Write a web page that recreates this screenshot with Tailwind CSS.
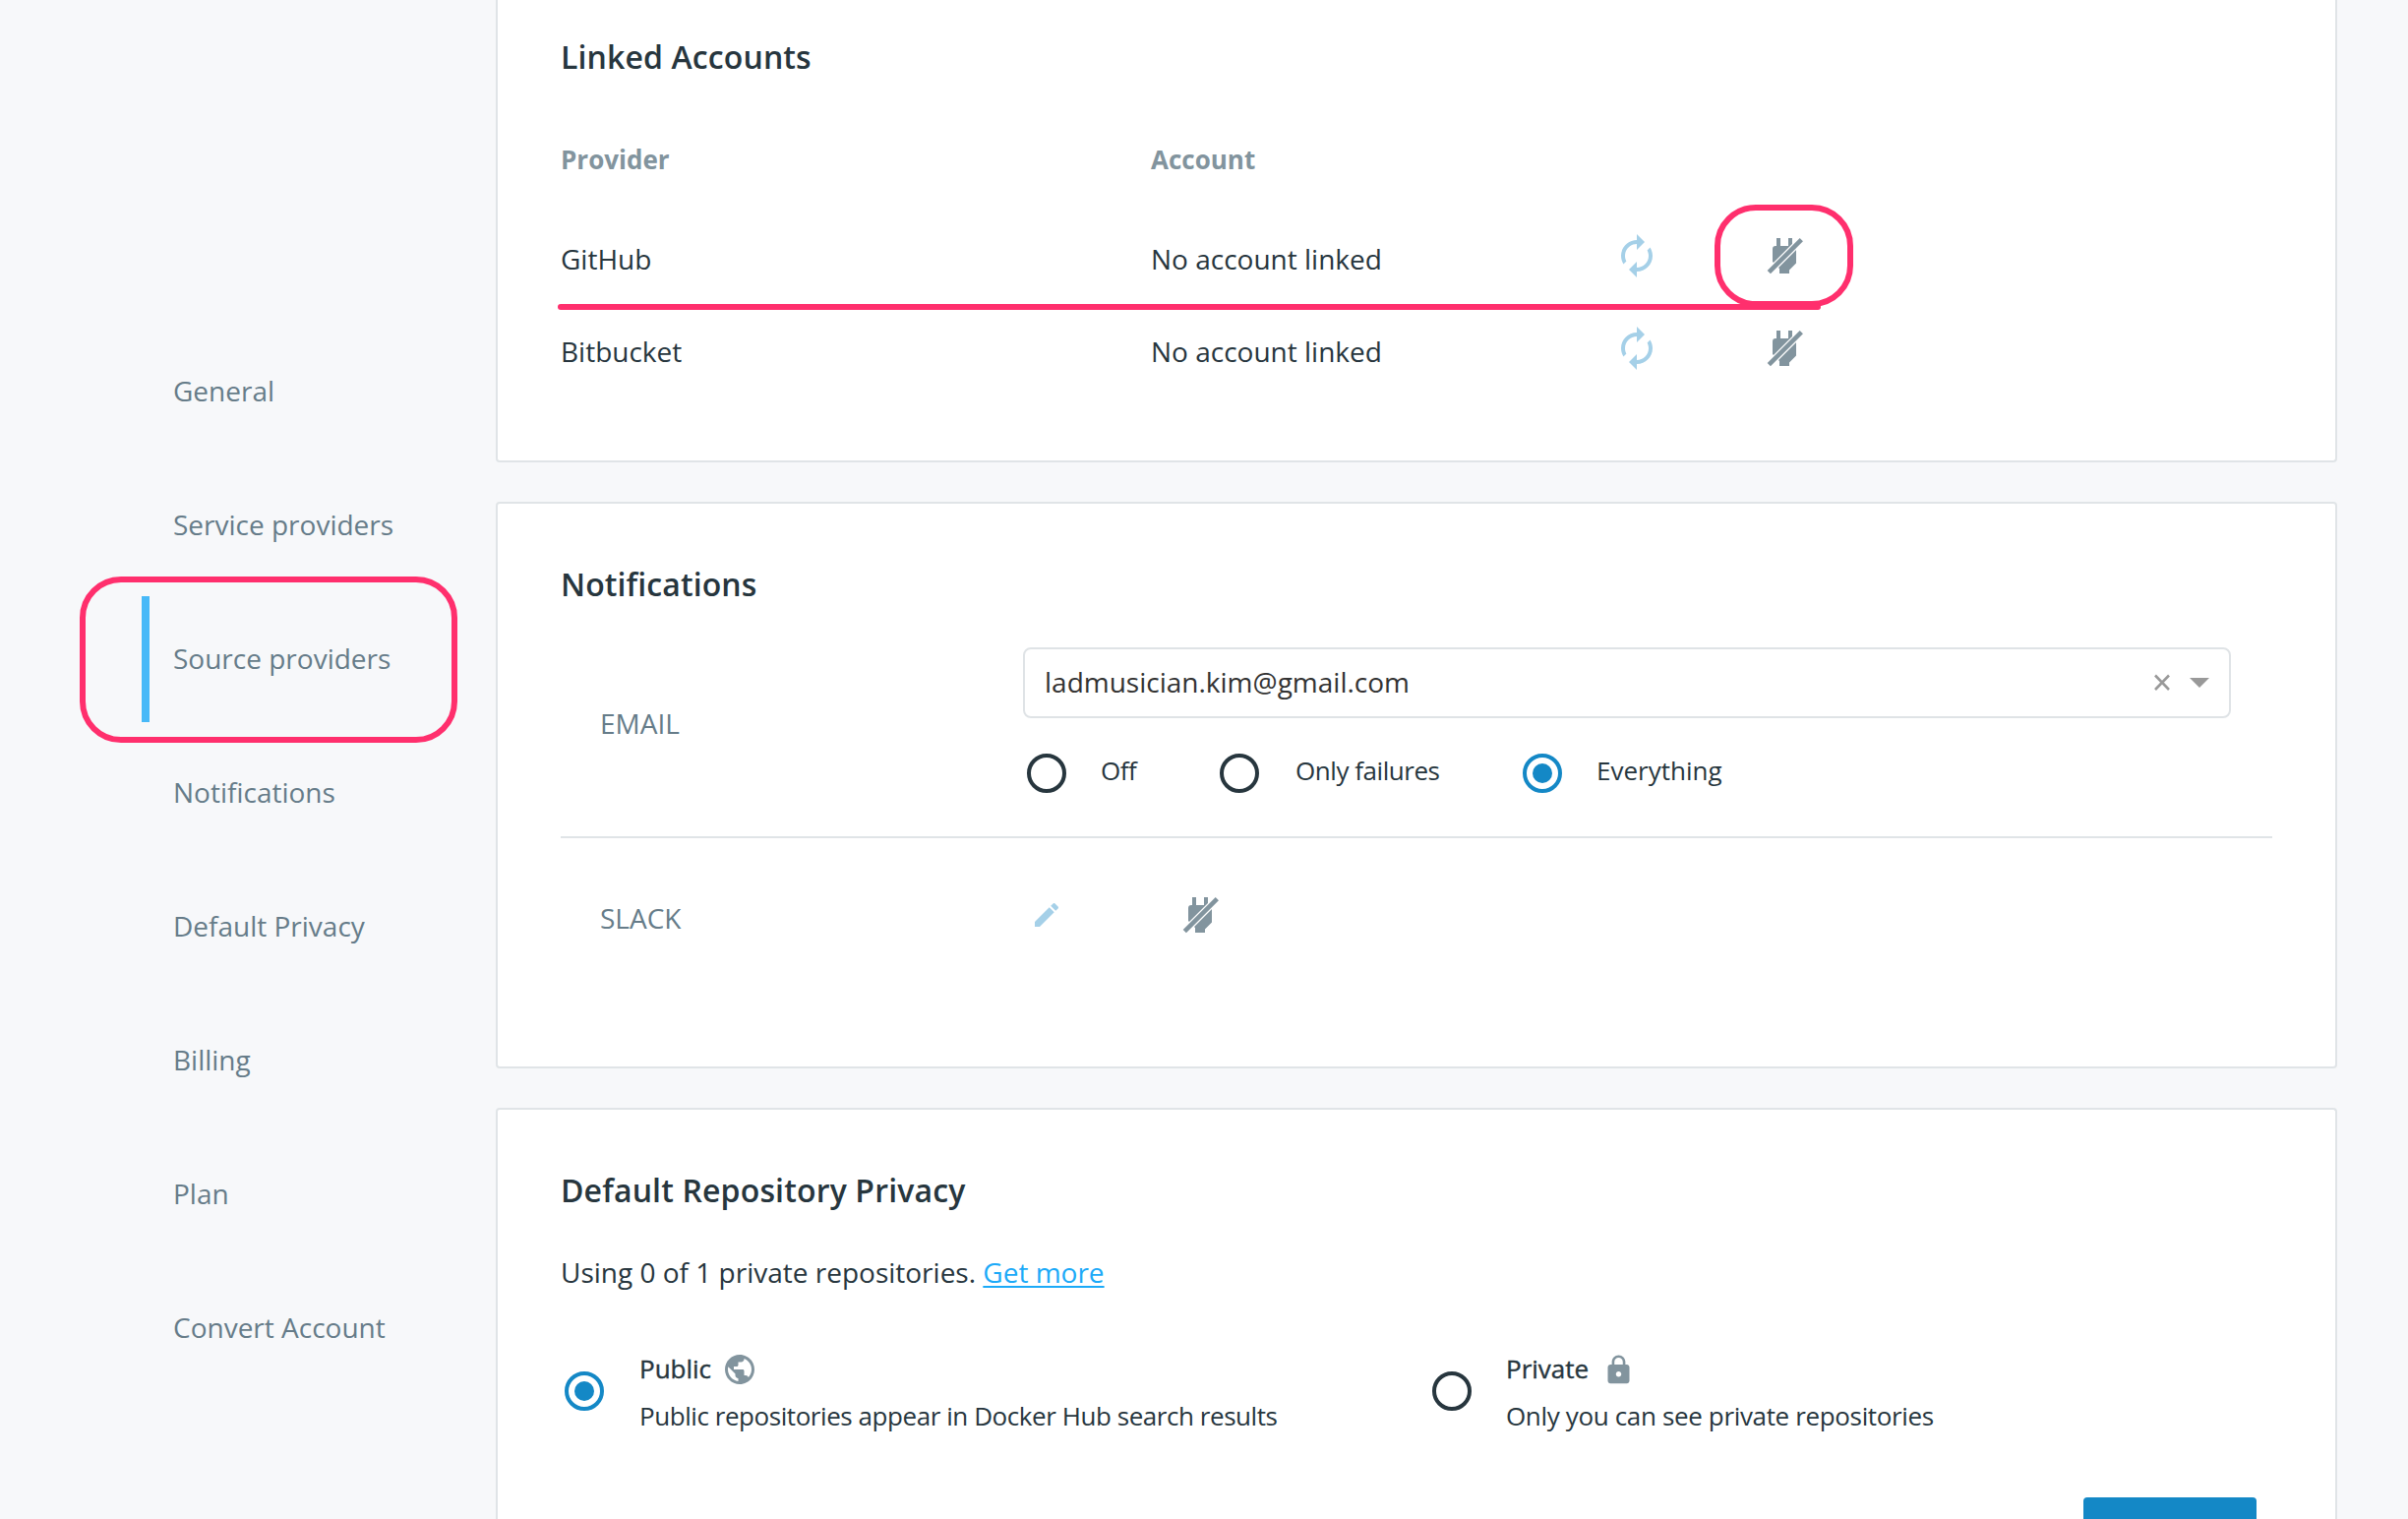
<!DOCTYPE html>
<html lang="en">
<head>
<meta charset="utf-8">
<title>Account Settings</title>
<script src="https://cdn.jsdelivr.net/npm/@tailwindcss/browser@4"></script>
</head>
<body class="relative h-[1544px] w-[2448px] overflow-hidden bg-[#f7f8fa] font-['Open_Sans',sans-serif] text-[28px] leading-[48px] text-[#27363e]">

<!-- Shared icons -->
<svg class="hidden">
  <symbol id="refresh" viewBox="0 0 24 24"><path d="M12 6v3l4-4-4-4v3c-4.42 0-8 3.58-8 8 0 1.57.46 3.03 1.24 4.26L6.7 14.8c-.45-.83-.7-1.79-.7-2.8 0-3.31 2.69-6 6-6zm6.76 1.74L17.3 9.2c.44.84.7 1.79.7 2.8 0 3.31-2.69 6-6 6v-3l-4 4 4 4v-3c4.42 0 8-3.58 8-8 0-1.57-.46-3.03-1.24-4.26z"/></symbol>
  <symbol id="unplug" viewBox="0 0 48 48">
    <path d="M16 6h4v8h8V6h4v8h1q3 0 3 3v14.500l-7 7V42H19v-5l-7-7V17q0-3 3-3h1z"/>
    <path d="M43 6L6.500 42.500" stroke="#fff" stroke-width="7.200"/>
    <path d="M41.300 7.700L8.300 40.700" stroke="currentColor" stroke-width="4.600"/>
  </symbol>
</svg>

<div class="flex h-full">
  <nav class="flex w-[504px] shrink-0 flex-col gap-2 pt-[334px] pl-36 text-[#667c89]">
    <a class="flex h-32 items-center border-l-8 border-transparent pb-0.5 pl-6">General</a>
    <a class="flex h-32 items-center border-l-8 border-transparent pb-0.5 pl-6">Service providers</a>
    <a class="flex h-32 items-center border-l-8 border-[#48b9f8] pb-0.5 pl-6">Source providers</a>
    <a class="flex h-32 items-center border-l-8 border-transparent pb-0.5 pl-6">Notifications</a>
    <a class="flex h-32 items-center border-l-8 border-transparent pb-0.5 pl-6">Default Privacy</a>
    <a class="flex h-32 items-center border-l-8 border-transparent pb-0.5 pl-6">Billing</a>
    <a class="flex h-32 items-center border-l-8 border-transparent pb-0.5 pl-6">Plan</a>
    <a class="flex h-32 items-center border-l-8 border-transparent pb-0.5 pl-6">Convert Account</a>
  </nav>

  <main class="flex w-[1872px] flex-col gap-10">
    <section class="h-[470px] rounded-b border-2 border-t-0 border-[#e0e4e7] bg-white px-16 pt-[34px]">
      <h2 class="text-[32px] leading-[47px] font-semibold tracking-[0.12px]">Linked Accounts</h2>
      <div class="mt-[51px] grid grid-cols-[600px_1fr] text-[26px] leading-[60px] font-bold text-[#82949e]">
        <div>Provider</div><div>Account</div>
      </div>
      <div class="mt-6 grid grid-cols-[600px_470px_150px_1fr] auto-rows-[94px] items-center">
        <div>GitHub</div>
        <div>No account linked</div>
        <svg class="mb-1.5 size-12 fill-[#a5d0e8]"><use href="#refresh"/></svg>
        <svg class="mb-1.5 size-12 fill-current text-[#82949e]"><use href="#unplug"/></svg>
        <div>Bitbucket</div>
        <div>No account linked</div>
        <svg class="mb-1.5 size-12 fill-[#a5d0e8]"><use href="#refresh"/></svg>
        <svg class="mb-1.5 size-12 fill-current text-[#82949e]"><use href="#unplug"/></svg>
      </div>
    </section>

    <section class="h-[576px] rounded border-2 border-[#e0e4e7] bg-white px-16 pt-[58px]">
      <h2 class="text-[32px] leading-[47px] font-semibold tracking-[0.1px]">Notifications</h2>
      <div class="mt-[41px] flex items-center border-b-2 border-[#e0e4e7] pb-[41px]">
        <div class="w-[470px] pt-[3px] pl-10 text-[#667c89]">EMAIL</div>
        <div>
          <div class="flex h-[72px] w-[1228px] items-center rounded-lg border-2 border-[#dfe3e6] pr-5 pl-5 text-[#333]">
            <span class="flex-1 pb-0.5">ladmusician.kim@gmail.com</span>
            <svg class="mr-[19px] size-[18px]" viewBox="0 0 18 18"><path d="M2 1.500L16 16M16 1.500L2 16" stroke="#999" stroke-width="2.600"/></svg>
            <svg class="h-2.5 w-5" viewBox="0 0 20 10"><path d="M0 0h20L10 10z" fill="#999"/></svg>
          </div>
          <div class="mt-[33px] flex items-center pl-1 text-[26px] leading-10">
            <label class="flex w-[196px] items-center gap-[35px]"><span class="size-10 rounded-full border-4 border-[#27363e]"></span><span class="mb-1.5 tracking-[-0.5px]">Off</span></label>
            <label class="flex w-[308px] items-center gap-[37px]"><span class="size-10 rounded-full border-4 border-[#27363e]"></span><span class="mb-1.5 tracking-[-0.45px]">Only failures</span></label>
            <label class="flex items-center gap-[35px]"><span class="flex size-10 items-center justify-center rounded-full border-4 border-[#1488c6]"><span class="size-5 rounded-full bg-[#1488c6]"></span></span><span class="mb-1.5">Everything</span></label>
          </div>
        </div>
      </div>
      <div class="mt-[54px] flex h-12 items-center">
        <div class="w-[478px] pt-1.5 pl-10 text-[#667c89]">SLACK</div>
        <svg class="mr-[116px] size-8 fill-[#a5d0e8]" viewBox="0 0 24 24"><path d="M3 17.250V21h3.750L17.810 9.940l-3.750-3.750L3 17.250zM20.710 7.040c.39-.39.39-1.020 0-1.410l-2.340-2.340c-.39-.39-1.020-.39-1.410 0l-1.830 1.830 3.750 3.750 1.830-1.830z"/></svg>
        <svg class="size-12 fill-current text-[#82949e]"><use href="#unplug"/></svg>
      </div>
    </section>

    <section class="h-[418px] overflow-hidden rounded-t border-2 border-b-0 border-[#e0e4e7] bg-white px-16 pt-[58px]">
      <h2 class="text-[32px] leading-[47px] font-semibold tracking-[0.15px]">Default Repository Privacy</h2>
      <p class="mt-9">Using 0 of 1 private repositories. <a class="text-[#1caaf8] underline decoration-2 underline-offset-[3px]">Get more</a></p>
      <div class="mt-[50px] flex pl-1 text-[26px]">
        <label class="flex w-[882px] items-center gap-9">
          <span class="mb-0.5 flex size-10 items-center justify-center rounded-full border-4 border-[#1488c6]"><span class="size-5 rounded-full bg-[#1488c6]"></span></span>
          <span>
            <span class="flex items-center">
              <span class="w-[84px] font-medium [-webkit-text-stroke:0.4px]">Public</span>
              <svg class="mt-0.5 size-9 fill-[#82949e]" viewBox="0 0 24 24"><path d="M12 2C6.480 2 2 6.480 2 12s4.480 10 10 10 10-4.480 10-10S17.520 2 12 2zm-1 17.930c-3.950-.49-7-3.850-7-7.930 0-.62.08-1.210.21-1.790L9 15v1c0 1.100.9 2 2 2v1.930zm6.900-2.540c-.26-.81-1-1.390-1.900-1.390h-1v-3c0-.55-.45-1-1-1H8v-2h2c.55 0 1-.45 1-1V7h2c1.100 0 2-.9 2-2v-.41c2.930 1.190 5 4.060 5 7.410 0 2.080-.8 3.970-2.100 5.390z"/></svg>
            </span>
            <span class="block tracking-[-0.44px]">Public repositories appear in Docker Hub search results</span>
          </span>
        </label>
        <label class="flex items-center gap-[35px]">
          <span class="mb-0.5 size-10 rounded-full border-4 border-[#27363e]"></span>
          <span>
            <span class="flex items-center">
              <span class="w-[98px] font-medium [-webkit-text-stroke:0.4px]">Private</span>
              <svg class="mt-0.5 size-[33px] fill-[#82949e]" viewBox="0 0 24 24"><path d="M18 8h-1V6c0-2.760-2.240-5-5-5S7 3.240 7 6v2H6c-1.100 0-2 .9-2 2v10c0 1.100.9 2 2 2h12c1.100 0 2-.9 2-2V10c0-1.100-.9-2-2-2zm-6 9c-1.100 0-2-.9-2-2s.9-2 2-2 2 .9 2 2-.9 2-2 2zm3.100-9H8.900V6c0-1.710 1.390-3.100 3.100-3.100 1.710 0 3.100 1.390 3.100 3.100v2z"/></svg>
            </span>
            <span class="block tracking-[-0.35px]">Only you can see private repositories</span>
          </span>
        </label>
      </div>
      <div class="mt-[59px] flex justify-end pr-4"><button class="h-[22px] w-44 rounded-t bg-[#1488c6]"></button></div>
    </section>
  </main>
</div>

<!-- Highlight marks over the page -->
<div class="absolute top-[586px] left-[81px] h-[169px] w-[384px] rounded-[42px] border-6 border-[#ff2f6d]"></div>
<div class="absolute top-[208px] left-[1743px] h-[104px] w-[141px] rounded-[42px] border-6 border-[#ff2f6d]"></div>
<div class="absolute top-[309px] left-[567px] h-1.5 w-[1284px] rounded-full bg-[#ff2f6d]"></div>
</body>
</html>
